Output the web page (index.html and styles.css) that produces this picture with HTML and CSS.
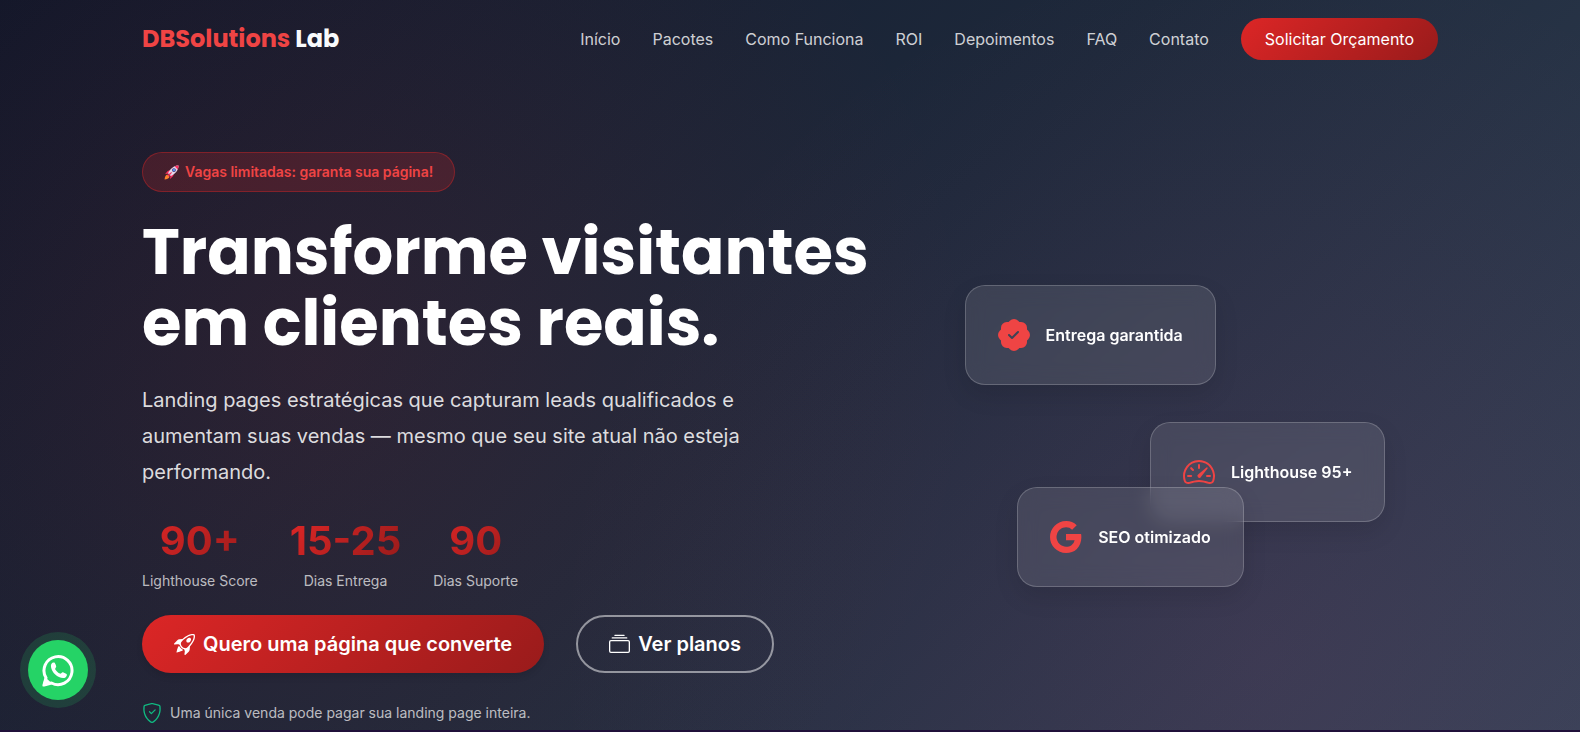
FILE: index.html
```html
<!DOCTYPE html>
<html lang="pt-BR">
<head>
    <meta charset="UTF-8">
    <meta name="viewport" content="width=device-width, initial-scale=1.0">
    <title>DBSolutions Lab</title>
    <link rel="stylesheet" href="styles.css">
</head>
<body>
    <div class="page-top">
        <header>
            <nav class="container navbar">
                <a class="logo" href="#inicio"><span>DBSolutions</span> Lab</a>
                <div class="nav-links">
                    <a href="#inicio">Início</a>
                    <a href="#pacotes">Pacotes</a>
                    <a href="#como-funciona">Como Funciona</a>
                    <a href="#roi">ROI</a>
                    <a href="#depoimentos">Depoimentos</a>
                    <a href="#faq">FAQ</a>
                    <a href="#contato">Contato</a>
                    <a class="nav-cta" href="#contato">Solicitar Orçamento</a>
                </div>
            </nav>
        </header>

        <main class="container hero" id="inicio">
            <div class="hero-content">
                <div class="badge">
                    <svg class="badge-icon" viewBox="0 0 16 16" aria-hidden="true">
                        <path fill="#f92f60" d="M4 6.5 7.5 5 5.5 9 1.2 9.6zM9.500 12 11 8.500 7 10.500 6.400 14.800z"/>
                        <path fill="#e1d8ec" d="M15.500.5c-4-.2-8.300 2.500-11.200 8.200L7.300 11.700C13 8.800 15.700 4.500 15.500.5z"/>
                        <path fill="#f92f60" d="M15.500.5c-1.500-.1-2.900.2-4.200.8l3.400 3.400c.6-1.300.9-2.700.8-4.200z"/>
                        <circle cx="10.600" cy="5.400" r="2" fill="#533566"/>
                        <circle cx="10.600" cy="5.400" r="1.300" fill="#5092ff"/>
                        <path fill="#ff822d" d="M3.500 10 6 12.500C5 14.500 3 15.300.6 15.400.7 13 1.500 11 3.500 10z"/>
                        <path fill="#f92f60" d="M7.700 7.500 8.500 8.300 5 12.300 3.700 11z"/>
                    </svg>
                    Vagas limitadas: garanta sua página!
                </div>
                <h1>Transforme visitantes em clientes reais.</h1>
                <p class="lead">Landing pages estratégicas que capturam leads qualificados e aumentam suas vendas — mesmo que seu site atual não esteja performando.</p>

                <div class="stats">
                    <div class="stat">
                        <div class="stat-number">90+</div>
                        <div class="stat-label">Lighthouse Score</div>
                    </div>
                    <div class="stat">
                        <div class="stat-number">15-25</div>
                        <div class="stat-label">Dias Entrega</div>
                    </div>
                    <div class="stat">
                        <div class="stat-number">90</div>
                        <div class="stat-label">Dias Suporte</div>
                    </div>
                </div>

                <div class="actions">
                    <a class="btn btn-primary" href="#contato">
                        <svg class="icon" viewBox="0 0 16 16" aria-hidden="true">
                            <path d="M9.752 6.193c.599.6 1.73.437 2.528-.362s.96-1.932.362-2.531c-.599-.6-1.73-.438-2.528.361-.798.8-.96 1.933-.362 2.532"/>
                            <path d="M15.811 3.312c-.363 1.534-1.334 3.626-3.64 6.218l-.24 2.408a2.56 2.56 0 0 1-.732 1.526L8.817 15.85a.51.51 0 0 1-.867-.434l.27-1.899c.04-.28-.013-.593-.131-.956a9 9 0 0 0-.249-.657l-.082-.202c-.815-.197-1.578-.662-2.191-1.277-.614-.615-1.079-1.379-1.275-2.195l-.203-.083a10 10 0 0 0-.655-.248c-.363-.119-.675-.172-.955-.132l-1.896.27A.51.51 0 0 1 .15 7.17l2.382-2.386c.41-.41.947-.67 1.524-.734h.006l2.4-.238C9.005 1.55 11.087.582 12.623.208c.89-.217 1.59-.232 2.08-.188.244.023.435.06.57.093q.1.026.16.045c.184.06.279.13.351.295l.029.073a3.5 3.5 0 0 1 .157.721c.055.485.051 1.178-.159 2.065m-4.828 7.475.04-.04-.107 1.081a1.54 1.54 0 0 1-.44.913l-1.298 1.3.054-.38c.072-.506-.034-.993-.172-1.418a9 9 0 0 0-.164-.45c.738-.065 1.462-.38 2.087-1.006M5.205 5c-.625.626-.94 1.351-1.004 2.09a9 9 0 0 0-.45-.164c-.424-.138-.91-.244-1.416-.172l-.38.054 1.3-1.3c.245-.246.566-.401.91-.44l1.08-.107zm9.406-3.961c-.38-.034-.967-.027-1.746.163-1.558.38-3.917 1.496-6.937 4.521-.62.62-.799 1.34-.687 2.051.107.676.483 1.362 1.048 1.928.564.565 1.25.941 1.924 1.049.71.112 1.429-.067 2.048-.688 3.079-3.083 4.192-5.444 4.556-6.987.183-.771.18-1.345.138-1.713a3 3 0 0 0-.045-.283 3 3 0 0 0-.3-.041Z"/>
                            <path d="M7.009 12.139a7.6 7.6 0 0 1-1.804-1.352A7.6 7.6 0 0 1 3.794 8.86c-1.102.992-1.965 5.054-1.839 5.18.125.126 3.936-.896 5.054-1.902Z"/>
                        </svg>
                        Quero uma página que converte
                    </a>
                    <a class="btn btn-outline" href="#pacotes">
                        <svg class="icon" viewBox="0 0 16 16" aria-hidden="true">
                            <path d="M2.500 3.500a.5.5 0 0 1 0-1h11a.5.5 0 0 1 0 1zm2-2a.5.5 0 0 1 0-1h7a.5.5 0 0 1 0 1zM0 13a1.500 1.500 0 0 0 1.500 1.500h13A1.500 1.500 0 0 0 16 13V6a1.500 1.500 0 0 0-1.500-1.500h-13A1.500 1.500 0 0 0 0 6zm1.500.5A.5.5 0 0 1 1 13V6a.5.5 0 0 1 .5-.5h13a.5.5 0 0 1 .5.5v7a.5.5 0 0 1-.5.5z"/>
                        </svg>
                        Ver planos
                    </a>
                </div>

                <p class="note">
                    <svg class="note-icon" viewBox="0 0 16 16" aria-hidden="true">
                        <path d="M5.338 1.590a61 61 0 0 0-2.837.856.48.48 0 0 0-.328.39c-.554 4.157.726 7.190 2.253 9.188a10.700 10.700 0 0 0 2.287 2.233c.346.244.652.42.893.533q.18.085.293.118a1 1 0 0 0 .101.025 1 1 0 0 0 .1-.025q.114-.034.294-.118c.24-.113.547-.29.893-.533a10.700 10.700 0 0 0 2.287-2.233c1.527-1.997 2.807-5.031 2.253-9.188a.48.48 0 0 0-.328-.39c-.651-.213-1.750-.56-2.837-.855C9.552 1.290 8.531 1.067 8 1.067c-.53 0-1.552.223-2.662.524zM5.072.56C6.157.265 7.310 0 8 0s1.843.265 2.928.56c1.110.3 2.229.655 2.887.87a1.540 1.540 0 0 1 1.044 1.262c.596 4.477-.787 7.795-2.465 9.990a11.800 11.800 0 0 1-2.517 2.453 7 7 0 0 1-1.048.625c-.28.132-.581.24-.829.24s-.548-.108-.829-.24a7 7 0 0 1-1.048-.625 11.800 11.800 0 0 1-2.517-2.453C1.928 10.487.545 7.169 1.141 2.692A1.540 1.540 0 0 1 2.185 1.430 63 63 0 0 1 5.072.56"/>
                        <path d="M10.854 5.146a.5.5 0 0 1 0 .708l-3 3a.5.5 0 0 1-.708 0l-1.500-1.500a.5.5 0 1 1 .708-.708L7.500 7.793l2.646-2.647a.5.5 0 0 1 .708 0"/>
                    </svg>
                    Uma única venda pode pagar sua landing page inteira.
                </p>
            </div>

            <div class="hero-visual">
                <div class="float-card card-delivery">
                    <svg viewBox="0 0 16 16" aria-hidden="true">
                        <path d="M10.067.87a2.890 2.890 0 0 0-4.134 0l-.622.638-.89-.011a2.890 2.890 0 0 0-2.924 2.924l.01.89-.636.622a2.890 2.890 0 0 0 0 4.134l.637.622-.011.89a2.890 2.890 0 0 0 2.924 2.924l.89-.01.622.636a2.890 2.890 0 0 0 4.134 0l.622-.637.89.011a2.890 2.890 0 0 0 2.924-2.924l-.01-.89.636-.622a2.890 2.890 0 0 0 0-4.134l-.637-.622.011-.89a2.890 2.890 0 0 0-2.924-2.924l-.89.01zm.287 5.984-3 3a.5.5 0 0 1-.708 0l-1.500-1.500a.5.5 0 1 1 .708-.708L7 8.793l2.646-2.647a.5.5 0 0 1 .708.708z"/>
                    </svg>
                    <span>Entrega garantida</span>
                </div>
                <div class="float-card card-lighthouse">
                    <svg viewBox="0 0 16 16" aria-hidden="true">
                        <path d="M8 4a.5.5 0 0 1 .5.5V6a.5.5 0 0 1-1 0V4.500A.5.5 0 0 1 8 4M3.732 5.732a.5.5 0 0 1 .707 0l.915.914a.5.5 0 1 1-.708.708l-.914-.915a.5.5 0 0 1 0-.707M2 10a.5.5 0 0 1 .5-.5h1.586a.5.5 0 0 1 0 1H2.500A.5.5 0 0 1 2 10m9.500 0a.5.5 0 0 1 .5-.5h1.500a.5.5 0 0 1 0 1H12a.5.5 0 0 1-.5-.5m.754-4.246a.39.39 0 0 0-.527-.02L7.547 9.310a.91.91 0 1 0 1.302 1.258l3.434-4.297a.39.39 0 0 0-.029-.518z"/>
                        <path fill-rule="evenodd" d="M0 10a8 8 0 1 1 15.547 2.661c-.442 1.253-1.845 1.602-2.932 1.250C11.309 13.488 9.475 13 8 13c-1.474 0-3.310.488-4.615.911-1.087.352-2.490.003-2.932-1.250A8 8 0 0 1 0 10m8-7a7 7 0 0 0-6.603 9.329c.203.575.923.876 1.680.63C4.397 12.533 6.358 12 8 12s3.604.532 4.923.96c.757.245 1.477-.056 1.680-.631A7 7 0 0 0 8 3"/>
                    </svg>
                    <span>Lighthouse 95+</span>
                </div>
                <div class="float-card card-seo">
                    <svg viewBox="0 0 16 16" aria-hidden="true">
                        <path d="M15.545 6.558a9.400 9.400 0 0 1 .139 1.626c0 2.434-.87 4.492-2.384 5.885h.002C11.978 15.292 10.158 16 8 16A8 8 0 1 1 8 0a7.700 7.700 0 0 1 5.352 2.082l-2.284 2.284A4.350 4.350 0 0 0 8 3.166c-2.087 0-3.860 1.408-4.492 3.304a4.800 4.800 0 0 0 0 3.063h.003c.635 1.893 2.405 3.301 4.492 3.301 1.078 0 2.004-.276 2.722-.764h-.003a3.700 3.700 0 0 0 1.599-2.431H8v-3.080z"/>
                    </svg>
                    <span>SEO otimizado</span>
                </div>
            </div>
        </main>
    </div>

    <a class="whatsapp" href="#whatsapp" aria-label="WhatsApp">
        <svg viewBox="0 0 33 33" aria-hidden="true">
            <path fill="none" stroke="currentColor" stroke-width="3" stroke-linejoin="round" d="M2 31 4 23.800A14 14 0 1 1 9.500 29z"/>
            <path fill="currentColor" d="M.5 32.500 3 23l7 6.500z"/>
            <path fill="currentColor" d="M9 13C8.500 10 10 8.500 11.500 8.500c1 0 1.500.4 2 1.800.8 2 1 2.500.2 3.500s-.6 1.400 0 2.200c1 1.400 2.400 2.800 4.200 3.600.7.3 1 .2 1.600-.6.7-.9 1.200-.9 2-.5l2.600 1.300c.8.4.9.8.7 1.600-.4 1.600-2 2.600-3.600 2.600C15.500 24 9.800 18.500 9 13z"/>
        </svg>
    </a>
</body>
</html>
```

FILE: styles.css
```css
:root {
    --primary: #dc2626;
    --primary-dark: #991b1b;
    --primary-light: #ef4444;
    --success: #10b981;
    --gradient: linear-gradient(135deg, #dc2626 0%, #991b1b 100%);
}

* {
    box-sizing: border-box;
}

body {
    margin: 0;
    min-height: 100vh;
    background-color: #20103a;
    color: #fff;
    font-family: 'Inter', sans-serif;
    font-size: 16px;
    line-height: 26px;
}

a {
    color: inherit;
    text-decoration: none;
}

svg {
    display: block;
    flex-shrink: 0;
    fill: currentColor;
}

.page-top {
    background:
        radial-gradient(circle at 20% 50%, rgba(220, 38, 38, 0.1) 0%, transparent 50%),
        radial-gradient(circle at 80% 90%, rgba(236, 72, 153, 0.09) 0%, transparent 50%),
        linear-gradient(135deg, #0f172a 0%, #1e293b 50%, #334155 100%);
}

.container {
    width: 100%;
    max-width: 1320px;
    margin: 0 auto;
    padding: 0 12px;
}

.navbar {
    display: flex;
    justify-content: space-between;
    align-items: center;
    padding-top: 18px;
    padding-bottom: 18px;
}

.logo {
    font-family: 'Poppins', 'Inter', sans-serif;
    font-size: 24px;
    font-weight: 700;
    color: #f8fafc;
}

.logo span {
    color: var(--primary-light);
}

.nav-links {
    display: flex;
    align-items: center;
    gap: 32px;
    color: rgba(255, 255, 255, 0.8);
}

.nav-cta {
    padding: 8px 24px;
    border-radius: 24px;
    background: var(--gradient);
    color: #fff;
}

.hero {
    display: grid;
    grid-template-columns: repeat(12, 1fr);
    column-gap: 24px;
    align-items: center;
    padding-top: 74px;
    padding-bottom: 6px;
}

.hero-content {
    grid-column: span 7;
}

.badge {
    display: inline-flex;
    align-items: center;
    gap: 6px;
    padding: 8px 21px;
    border: 1px solid rgba(220, 38, 38, 0.4);
    border-radius: 24px;
    background-color: rgba(220, 38, 38, 0.2);
    color: var(--primary-light);
    font-size: 14px;
    font-weight: 600;
    line-height: 22px;
}

.badge-icon {
    width: 15px;
    height: 15px;
}

h1 {
    margin: 24px 0;
    font-family: 'Poppins', 'Inter', sans-serif;
    font-size: 64px;
    font-weight: 700;
    line-height: 71px;
}

.lead {
    max-width: 600px;
    margin: 0 0 31px;
    color: rgba(255, 255, 255, 0.85);
    font-size: 20px;
    line-height: 36px;
}

.stats {
    display: flex;
    gap: 32px;
    margin-bottom: 23px;
    text-align: center;
}

.stat-number {
    margin-bottom: 8px;
    background: var(--gradient);
    -webkit-background-clip: text;
    background-clip: text;
    color: transparent;
    font-size: 40px;
    font-weight: 700;
    line-height: 40px;
}

.stat-label {
    color: rgba(255, 255, 255, 0.7);
    font-size: 14px;
    line-height: 23px;
}

.actions {
    display: flex;
    gap: 32px;
    margin-bottom: 28px;
}

.btn {
    display: inline-flex;
    align-items: center;
    gap: 8px;
    min-height: 58px;
    padding: 0 32px;
    border-radius: 29px;
    font-size: 20px;
    font-weight: 600;
}

.btn-primary {
    background: var(--gradient);
    box-shadow: 0 4px 6px rgba(0, 0, 0, 0.1);
}

.btn-outline {
    padding: 0 31px;
    border: 2px solid rgba(255, 255, 255, 0.5);
}

.icon {
    width: 21px;
    height: 21px;
}

.note {
    display: flex;
    align-items: center;
    gap: 8px;
    margin: 0;
    color: rgba(255, 255, 255, 0.7);
    font-size: 14px;
    line-height: 23px;
}

.note-icon {
    width: 20px;
    height: 20px;
    color: var(--success);
}

.hero-visual {
    position: relative;
    grid-column: span 5;
    height: 402px;
}

.float-card {
    position: absolute;
    display: flex;
    align-items: center;
    gap: 16px;
    padding: 33px 32px;
    border: 1px solid rgba(255, 255, 255, 0.2);
    border-radius: 20px;
    background-color: rgba(255, 255, 255, 0.1);
    backdrop-filter: blur(10px);
    box-shadow: 0 10px 24px rgba(0, 0, 0, 0.1);
    font-weight: 600;
    white-space: nowrap;
}

.float-card svg {
    width: 32px;
    height: 32px;
    color: var(--primary-light);
}

.card-delivery {
    top: 12%;
    left: 10%;
}

.card-lighthouse {
    top: 46%;
    right: 10%;
}

.card-seo {
    bottom: 13%;
    left: 20%;
}

.whatsapp {
    position: fixed;
    left: 28px;
    bottom: 32px;
    display: flex;
    align-items: center;
    justify-content: center;
    width: 60px;
    height: 60px;
    border-radius: 50%;
    background-color: #25d366;
    box-shadow: 0 0 0 8px rgba(37, 211, 102, 0.16);
}

.whatsapp svg {
    width: 33px;
    height: 33px;
}
```
